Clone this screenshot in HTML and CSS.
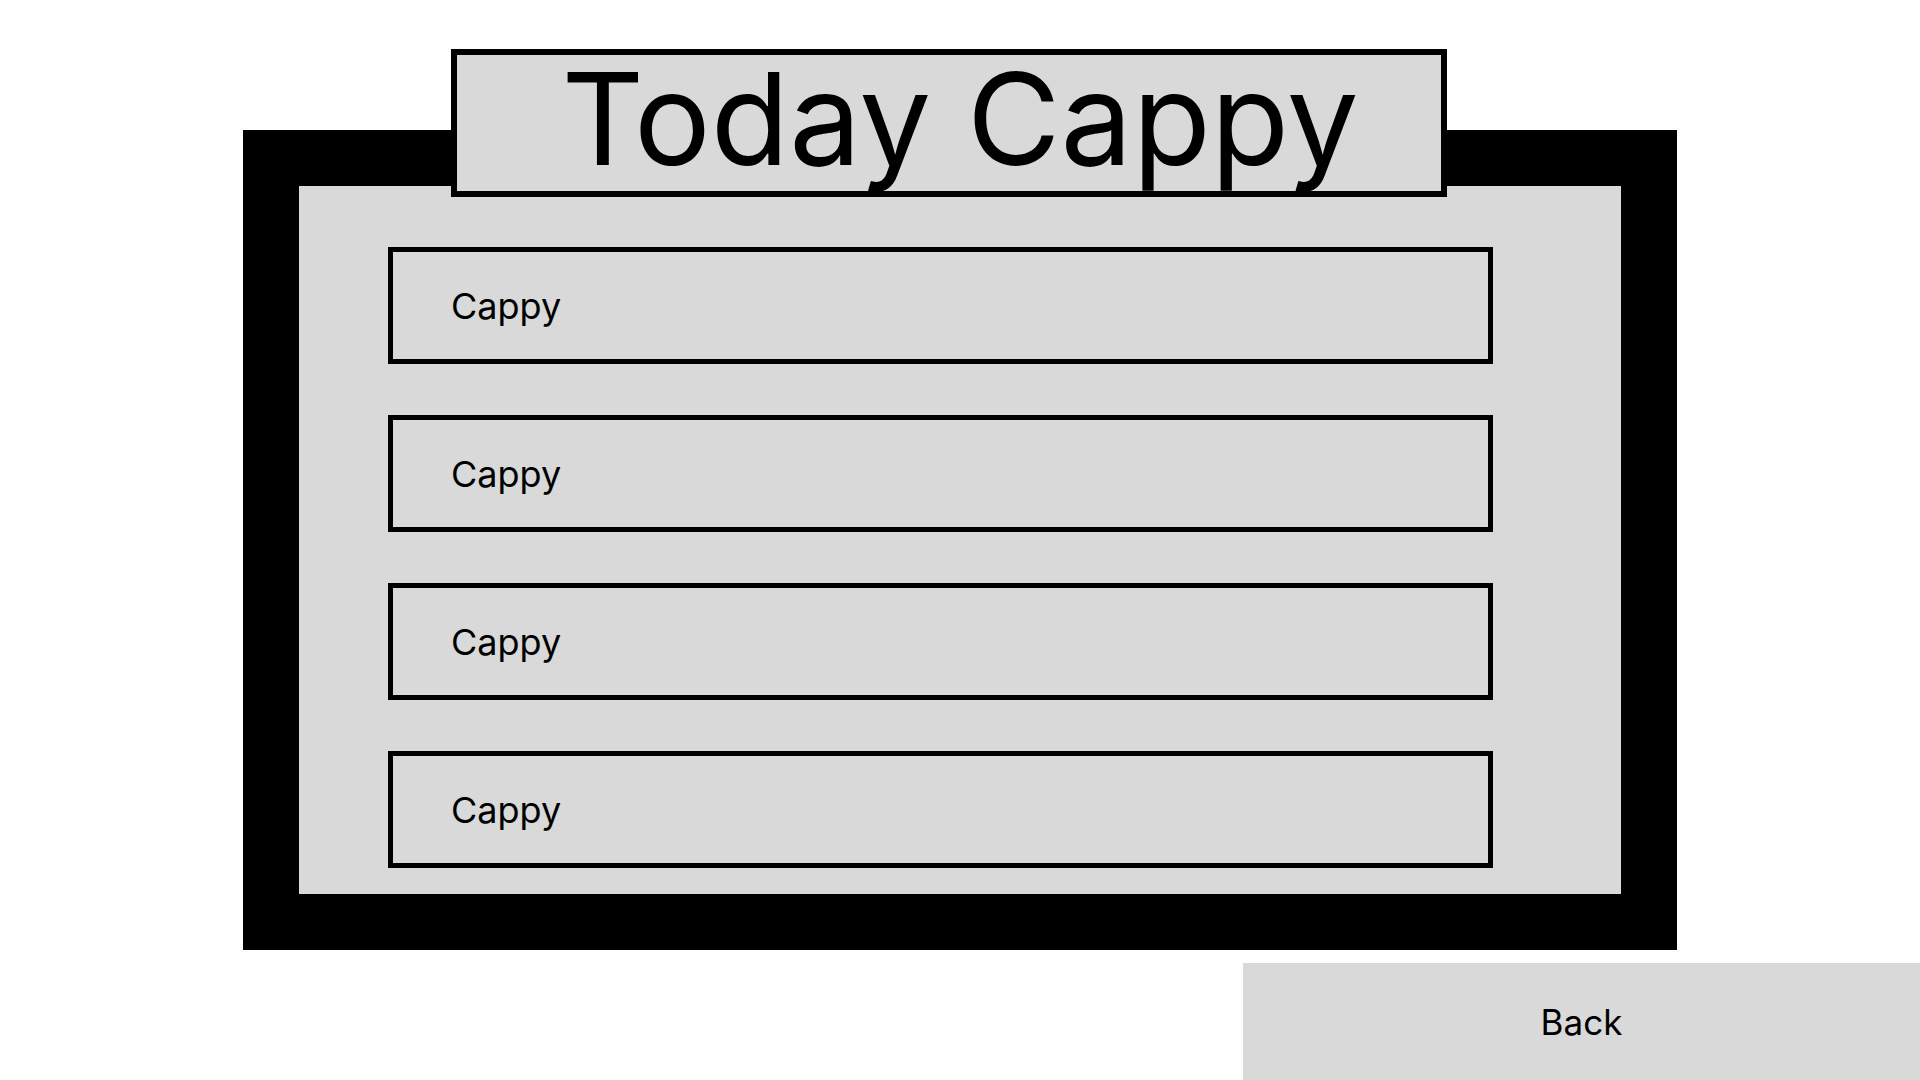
FILE: index.html
```html
<!DOCTYPE html>
<html lang="en">
<head>
    <meta charset="UTF-8">
    <meta name="viewport" content="width=device-width, initial-scale=1.0">
    <title>Today Cappy</title>
    <link rel="stylesheet" href="styles.css">
</head>
<body>

<div class="page">
    <div class="board">
        <!-- title tab over the frame -->
        <h1 class="board-title">Today Cappy</h1>

        <div class="board-inner">
            <div class="cappy-row">Cappy</div>
            <div class="cappy-row">Cappy</div>
            <div class="cappy-row">Cappy</div>
            <div class="cappy-row">Cappy</div>
        </div>
    </div>

    <div class="footer">
        <button class="back-button">Back</button>
    </div>
</div>

</body>
</html>
```

FILE: styles.css
```css
body {
    font-family: Inter, "Noto Sans", Arial, sans-serif;
    background-color: #fff;
    color: #000;
    margin: 0;
}
.page {
    width: 1920px;
    height: 1080px;
    padding-top: 130px;
    box-sizing: border-box;
    display: flex;
    flex-direction: column;
    overflow: hidden;
}
.board {
    position: relative;
    margin-left: 243px;
    width: 1434px;
    height: 820px;
    box-sizing: border-box;
    border: 56px solid #000;
    background-color: #d9d9d9;
}
.board-title {
    position: absolute;
    top: -137px;
    left: 152px;
    width: 996px;
    height: 148px;
    box-sizing: border-box;
    margin: 0;
    border: 6px solid #000;
    background-color: #d9d9d9;
    font-size: 128px;
    font-weight: 400;
    line-height: 128px;
    text-align: center;
    padding-left: 22px;
}
.board-inner {
    height: 100%;
    box-sizing: border-box;
    padding: 61px 128px 25px 89px;
    display: flex;
    flex-direction: column;
    gap: 51px;
}
.cappy-row {
    height: 117px;
    box-sizing: border-box;
    border: 5px solid #000;
    display: flex;
    align-items: center;
    padding-left: 58px;
    font-size: 36px;
}
.footer {
    display: flex;
    justify-content: flex-end;
    margin-top: 13px;
}
.back-button {
    width: 677px;
    height: 117px;
    border: none;
    background-color: #d9d9d9;
    font-family: inherit;
    font-size: 35px;
    color: #000;
    cursor: pointer;
}
```
